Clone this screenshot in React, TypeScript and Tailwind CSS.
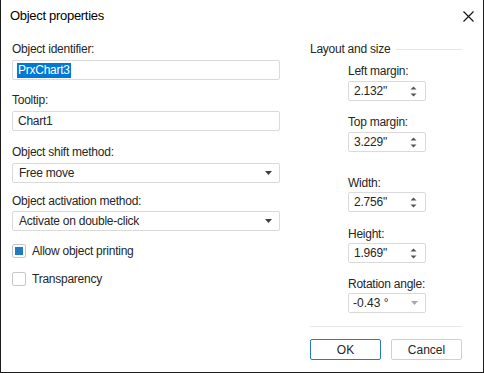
import { ReactNode } from "react";

const font = { fontFamily: '"Liberation Sans", Arial, sans-serif' };

function Label({ children, className = "" }: { children: ReactNode; className?: string }) {
  return (
    <div className={`h-[16px] text-[12px] leading-[16px] tracking-[-0.25px] text-[#262626] ${className}`}>
      {children}
    </div>
  );
}

function TextBox({ value, selected, className = "" }: { value: string; selected?: boolean; className?: string }) {
  return (
    <div
      className={`flex h-[20px] items-center rounded-[2px] border border-[#dadada] bg-white pl-[4px] text-[12px] tracking-[-0.25px] text-[#262626] ${className}`}
    >
      {selected ? (
        <span className="bg-[#0078d7] px-[1px] leading-[15px] text-white">{value}</span>
      ) : (
        <span className="px-[1px]">{value}</span>
      )}
    </div>
  );
}

function Caret({ color = "#404040" }: { color?: string }) {
  return (
    <svg width="7" height="4" viewBox="0 0 7 4">
      <path d="M0 0h7L3.5 4z" fill={color} />
    </svg>
  );
}

function Select({ value, className = "" }: { value: string; className?: string }) {
  return (
    <div
      className={`flex h-[20px] items-center justify-between rounded-[2px] border border-[#dadada] bg-white pl-[6px] pr-[7px] text-[12px] tracking-[-0.25px] text-[#262626] ${className}`}
    >
      <span>{value}</span>
      <Caret />
    </div>
  );
}

function Spin({ value, className = "" }: { value: string; className?: string }) {
  return (
    <div
      className={`flex h-[20px] w-[78px] items-center justify-between rounded-[2px] border border-[#dadada] bg-white pl-[5px] pr-[8px] text-[12px] tracking-[-0.2px] text-[#262626] ${className}`}
    >
      <span>{value}</span>
      <svg width="7" height="11" viewBox="0 0 7 11">
        <path d="M0.5 3.5L3.5 0.5L6.5 3.5z" fill="#555" />
        <path d="M0.5 7.5L3.5 10.5L6.5 7.5z" fill="#555" />
      </svg>
    </div>
  );
}

function Check({ checked, label, className = "" }: { checked?: boolean; label: string; className?: string }) {
  return (
    <div className={`flex h-[14px] items-center gap-[6px] ${className}`}>
      <div className="flex h-[14px] w-[14px] items-center justify-center rounded-[2px] border border-[#c8c8c8] bg-white">
        {checked && <div className="h-[8px] w-[8px] bg-[#1e7ac4]" />}
      </div>
      <span className="text-[12px] leading-[16px] tracking-[-0.25px] text-[#262626]">{label}</span>
    </div>
  );
}

export default function App() {
  return (
    <div
      style={font}
      className="flex h-[373px] w-[484px] flex-col border-x border-b border-[#1c1c1c] bg-white"
    >
      <div className="flex h-[32px] items-center justify-between pl-[9px] pr-[9px]">
        <span className="text-[13px] tracking-[-0.3px] text-[#000]">Object properties</span>
        <svg width="11" height="11" viewBox="0 0 11 11">
          <path d="M0.5 0.5L10.5 10.5M10.5 0.5L0.5 10.5" stroke="#111" strokeWidth="1.1" />
        </svg>
      </div>

      <div className="flex flex-1 pl-[11px] pr-[21px]">
        <div className="flex w-[269px] flex-col pt-[9px]">
          <Label>Object identifier:</Label>
          <TextBox className="mt-[3px]" value="PrxChart3" selected />
          <Label className="mt-[12px]">Tooltip:</Label>
          <TextBox className="mt-[3px]" value="Chart1" />
          <Label className="mt-[13px]">Object shift method:</Label>
          <Select className="mt-[3px]" value="Free move" />
          <Label className="mt-[10px]">Object activation method:</Label>
          <Select className="mt-[2px]" value="Activate on double-click" />
          <Check className="mt-[13px]" checked label="Allow object printing" />
          <Check className="mt-[14px]" label="Transparency" />
        </div>

        <div className="ml-[30px] flex flex-1 flex-col pt-[9px]">
          <div className="flex items-center gap-[6px]">
            <Label>Layout and size</Label>
            <div className="h-px flex-1 bg-[#e6e6e6]" />
          </div>
          <div className="flex flex-col pl-[38px]">
            <Label className="mt-[6px]">Left margin:</Label>
            <Spin className="mt-[2px]" value={'2.132"'} />
            <Label className="mt-[13px]">Top margin:</Label>
            <Spin className="mt-[2px]" value={'3.229"'} />
            <Label className="mt-[23px]">Width:</Label>
            <Spin className="mt-[1px]" value={'2.756"'} />
            <Label className="mt-[14px]">Height:</Label>
            <Spin className="mt-[1px]" value={'1.969"'} />
            <Label className="mt-[13px]">Rotation angle:</Label>
            <div className="mt-[1px] flex h-[20px] w-[78px] items-center justify-between rounded-[2px] border border-[#dadada] bg-white pl-[4px] pr-[7px] text-[12px] text-[#262626]">
              <span>-0.43 °</span>
              <Caret color="#a8a8a8" />
            </div>
          </div>
          <div className="mt-[13px] h-px bg-[#e8e8e8]" />
          <div className="mt-[12px] flex gap-[10px]">
            <button className="h-[21px] w-[71px] rounded-[2px] border border-[#2a79c2] bg-white text-[12px] text-[#262626]">
              OK
            </button>
            <button className="h-[21px] w-[71px] rounded-[2px] border border-[#d0d0d0] bg-white text-[12px] text-[#262626]">
              Cancel
            </button>
          </div>
        </div>
      </div>
    </div>
  );
}
